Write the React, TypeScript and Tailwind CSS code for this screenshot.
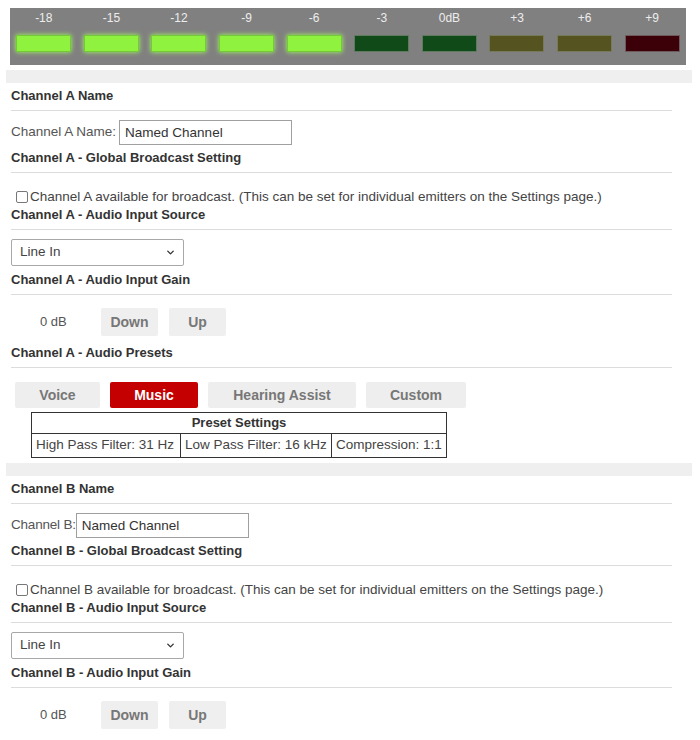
import { ChevronDown } from 'lucide-react';

const meter = [
  { label: '-18', color: 'lit' },
  { label: '-15', color: 'lit' },
  { label: '-12', color: 'lit' },
  { label: '-9', color: 'lit' },
  { label: '-6', color: 'lit' },
  { label: '-3', color: 'green' },
  { label: '0dB', color: 'green' },
  { label: '+3', color: 'olive' },
  { label: '+6', color: 'olive' },
  { label: '+9', color: 'red' },
];

const barClass: Record<string, string> = {
  lit: 'bg-[#8ef23f] border-[#74c83a] shadow-[0_0_5px_#a4ff60]',
  green: 'bg-[#0f4a18] border-[#5f7a5e]',
  olive: 'bg-[#55531f] border-[#777a5a]',
  red: 'bg-[#3b0008] border-[#6e5a5c]',
};

function Heading({ text, className = '' }: { text: string; className?: string }) {
  return (
    <div className={`w-[661px] border-b border-[#dcdcdc] pb-[6px] text-[13px] leading-[16px] font-bold text-[#333] ${className}`}>
      {text}
    </div>
  );
}

function Band({ className = '' }: { className?: string }) {
  return <div className={`-ml-[5px] h-[13px] w-[686px] bg-[#efefef] ${className}`} />;
}

function GrayButton({ label, width }: { label: string; width: string }) {
  return (
    <button className={`h-[28px] ${width} rounded-[2px] bg-[#efefef] text-[14px] font-semibold text-[#777]`}>
      {label}
    </button>
  );
}

function SourceSelect() {
  return (
    <div className="relative mt-[9px] h-[27px] w-[173px]">
      <select className="h-full w-full appearance-none rounded-[2px] border border-[#a8a8a8] bg-white pl-[8px] text-[13.5px] text-[#444]">
        <option>Line In</option>
        <option>Mic In</option>
      </select>
      <ChevronDown className="pointer-events-none absolute right-[8px] top-[8px] h-[11px] w-[11px] text-[#333]" strokeWidth={3} />
    </div>
  );
}

function Channel({ id, nameLabel, labelGap }: { id: string; nameLabel: string; labelGap: string }) {
  return (
    <>
      <Heading text={`Channel ${id} Name`} className="mt-[5px]" />
      <div className="mt-[9px] flex h-[25px] items-center text-[13.5px] text-[#555]">
        <span className={labelGap}>{nameLabel}</span>
        <input
          defaultValue="Named Channel"
          className="h-[25px] w-[173px] border border-[#a0a0a0] px-[5px] text-[13.5px] text-[#333] outline-none"
        />
      </div>
      <Heading text={`Channel ${id} - Global Broadcast Setting`} className="mt-[5px]" />
      <label className="mt-[16px] flex h-[16px] items-center pl-[5px] text-[13.5px] text-[#444]">
        <span className="mr-[2px] inline-block h-[12px] w-[12px] rounded-[2px] border border-[#777] bg-white" />
        Channel {id} available for broadcast. (This can be set for individual emitters on the Settings page.)
      </label>
      <Heading text={`Channel ${id} - Audio Input Source`} className="mt-[2px]" />
      <SourceSelect />
      <Heading text={`Channel ${id} - Audio Input Gain`} className="mt-[6px]" />
      <div className="mt-[13px] flex h-[28px] items-center">
        <span className="ml-[29px] w-[61px] text-[13px] text-[#555]">0 dB</span>
        <GrayButton label="Down" width="w-[57px]" />
        <div className="w-[11px]" />
        <GrayButton label="Up" width="w-[57px]" />
      </div>
    </>
  );
}

export default function App() {
  return (
    <div className="min-h-[740px] w-[700px] bg-white pt-[8px]" style={{ fontFamily: '"Liberation Sans", Arial, sans-serif' }}>
      {/* Level meter */}
      <div className="ml-[10px] grid h-[57px] w-[676px] grid-cols-10 bg-[#808080]">
        {meter.map((m) => (
          <div key={m.label} className="flex flex-col items-center">
            <span className="mt-[2px] h-[16px] text-[12px] leading-[16px] text-[#ededed]">{m.label}</span>
            <div className={`mt-[9px] h-[17px] w-[55px] border ${barClass[m.color]}`} />
          </div>
        ))}
      </div>

      <div className="mt-[5px] pl-[11px]">
        <Band />
        <Channel id="A" nameLabel="Channel A Name:" labelGap="mr-[3px]" />

        <Heading text="Channel A - Audio Presets" className="mt-[9px]" />
        <div className="mt-[14px] ml-[4px] flex gap-[10px]">
          <button className="h-[26px] w-[85px] rounded-[2px] bg-[#eeeeee] text-[14px] font-semibold text-[#777]">Voice</button>
          <button className="h-[26px] w-[88px] rounded-[2px] bg-[#c40000] text-[14px] font-bold text-white">Music</button>
          <button className="h-[26px] w-[148px] rounded-[2px] bg-[#eeeeee] text-[14px] font-semibold text-[#777]">Hearing Assist</button>
          <button className="h-[26px] w-[100px] rounded-[2px] bg-[#eeeeee] text-[14px] font-semibold text-[#777]">Custom</button>
        </div>
        <table className="mt-[4px] ml-[20px] w-[416px] border-collapse text-[13.5px] text-[#444]">
          <tbody>
            <tr>
              <th colSpan={3} className="h-[21px] border border-[#333] text-center text-[13px] font-bold text-[#333]">
                Preset Settings
              </th>
            </tr>
            <tr>
              <td className="h-[24px] w-[149px] border border-[#333] px-[4px] whitespace-nowrap">High Pass Filter: 31 Hz</td>
              <td className="w-[151px] border border-[#333] px-[4px] whitespace-nowrap">Low Pass Filter: 16 kHz</td>
              <td className="border border-[#333] px-[4px] whitespace-nowrap">Compression: 1:1</td>
            </tr>
          </tbody>
        </table>

        <Band className="mt-[5px]" />
        <Channel id="B" nameLabel="Channel B:" labelGap="mr-0 -tracking-[0.2px]" />
      </div>
    </div>
  );
}
